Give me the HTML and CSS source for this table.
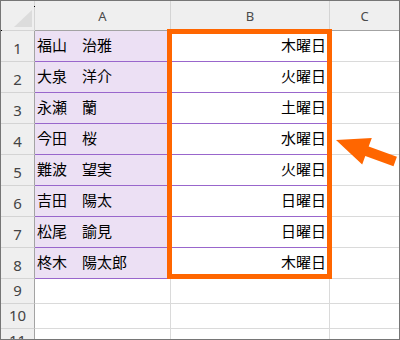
FILE: index.html
```html
<!DOCTYPE html>
<html lang="ja">
<head>
<meta charset="utf-8">
<link rel="stylesheet" href="styles.css">
</head>
<body>
<div class="sheet">
  <div class="grid">
    <div class="corner"><svg class="tri" width="33" height="29" viewBox="0 0 33 29"><polygon points="13,26 31,26 31,9" fill="#dcdcdc"/></svg></div>
    <div class="colhead">A</div>
    <div class="colhead">B</div>
    <div class="colhead last">C</div>

    <div class="rowhead">1</div><div class="cell name">福山　治雅</div><div class="cell day">木曜日</div><div class="cell c"></div>
    <div class="rowhead">2</div><div class="cell name">大泉　洋介</div><div class="cell day">火曜日</div><div class="cell c"></div>
    <div class="rowhead">3</div><div class="cell name">永瀬　蘭</div><div class="cell day">土曜日</div><div class="cell c"></div>
    <div class="rowhead">4</div><div class="cell name">今田　桜</div><div class="cell day">水曜日</div><div class="cell c"></div>
    <div class="rowhead">5</div><div class="cell name">難波　望実</div><div class="cell day">火曜日</div><div class="cell c"></div>
    <div class="rowhead">6</div><div class="cell name">吉田　陽太</div><div class="cell day">日曜日</div><div class="cell c"></div>
    <div class="rowhead">7</div><div class="cell name">松尾　諭見</div><div class="cell day">日曜日</div><div class="cell c"></div>
    <div class="rowhead">8</div><div class="cell name">柊木　陽太郎</div><div class="cell day">木曜日</div><div class="cell c"></div>

    <div class="rowhead short">9</div><div class="cell plain"></div><div class="cell plain"></div><div class="cell c"></div>
    <div class="rowhead short">10</div><div class="cell plain"></div><div class="cell plain"></div><div class="cell c"></div>
    <div class="rowhead short">11</div><div class="cell plain"></div><div class="cell plain"></div><div class="cell c"></div>
  </div>
  <div class="highlight"></div>
  <svg class="arrow" width="398" height="338" viewBox="0 0 398 338">
    <polygon points="335,139 370.8,137.1 367.7,145.6 395.9,155.8 392.5,165.2 364.3,155 361.2,163.4" fill="#ff6600"/>
  </svg>
  <span class="dot d1"></span>
  <span class="dot d2"></span>
</div>
</body>
</html>
```

FILE: styles.css
```css
html, body {
  margin: 0;
  padding: 0;
  background: #ffffff;
}

.sheet {
  position: relative;
  width: 400px;
  height: 340px;
  box-sizing: border-box;
  border: 1px solid #767676;
  overflow: hidden;
  background: #ffffff;
  font-family: "Noto Sans CJK JP", "Noto Sans", sans-serif;
}

.grid {
  display: grid;
  grid-template-columns: 34px 136px 159px 69px;
  grid-template-rows: 30px repeat(8, 31px) repeat(3, 25px);
}

.grid > div {
  box-sizing: border-box;
  display: flex;
  align-items: flex-end;
}

.corner {
  background: #efefef;
  border-right: 1px solid #d4d4d4;
  border-bottom: 1px solid #d4d4d4;
  position: relative;
}

.tri {
  position: absolute;
  left: 0;
  top: 0;
}

.colhead {
  background: #efefef;
  border-right: 1px solid #d4d4d4;
  border-bottom: 1px solid #a3a3a3;
  justify-content: center;
  font-family: "Noto Sans", "Open Sans", sans-serif;
  font-size: 13px;
  color: #4a4a4a;
  line-height: 16px;
  padding-bottom: 6px;
}

.colhead.last {
  border-right: none;
}

.rowhead {
  background: #efefef;
  border-right: 1px solid #a3a3a3;
  border-bottom: 1px solid #d4d4d4;
  justify-content: center;
  font-family: "Noto Sans", "Open Sans", sans-serif;
  font-size: 15px;
  color: #444444;
  line-height: 18px;
  padding-bottom: 4px;
}

.cell {
  border-right: 1px solid #dadada;
  border-bottom: 1px solid #dadada;
  font-size: 15px;
  line-height: 20px;
  color: #000000;
  padding-bottom: 6px;
  white-space: nowrap;
}

.name {
  background: #ece0f4;
  border-right-color: #9966cc;
  border-bottom-color: #9966cc;
  padding-left: 2px;
}

.day {
  background: #ffffff;
  border-bottom-color: #9966cc;
  justify-content: flex-end;
  padding-right: 3px;
}

.c {
  border-right: none;
}

.highlight {
  position: absolute;
  left: 166px;
  top: 28px;
  width: 165px;
  height: 250px;
  box-sizing: border-box;
  border: 5px solid #ff6600;
}

.arrow {
  position: absolute;
  left: 0;
  top: 0;
}

.dot {
  position: absolute;
  width: 1px;
  height: 1px;
  background: #000000;
}

.d1 {
  left: 33px;
  top: 5px;
}

.d2 {
  left: 0;
  top: 29px;
}
```
